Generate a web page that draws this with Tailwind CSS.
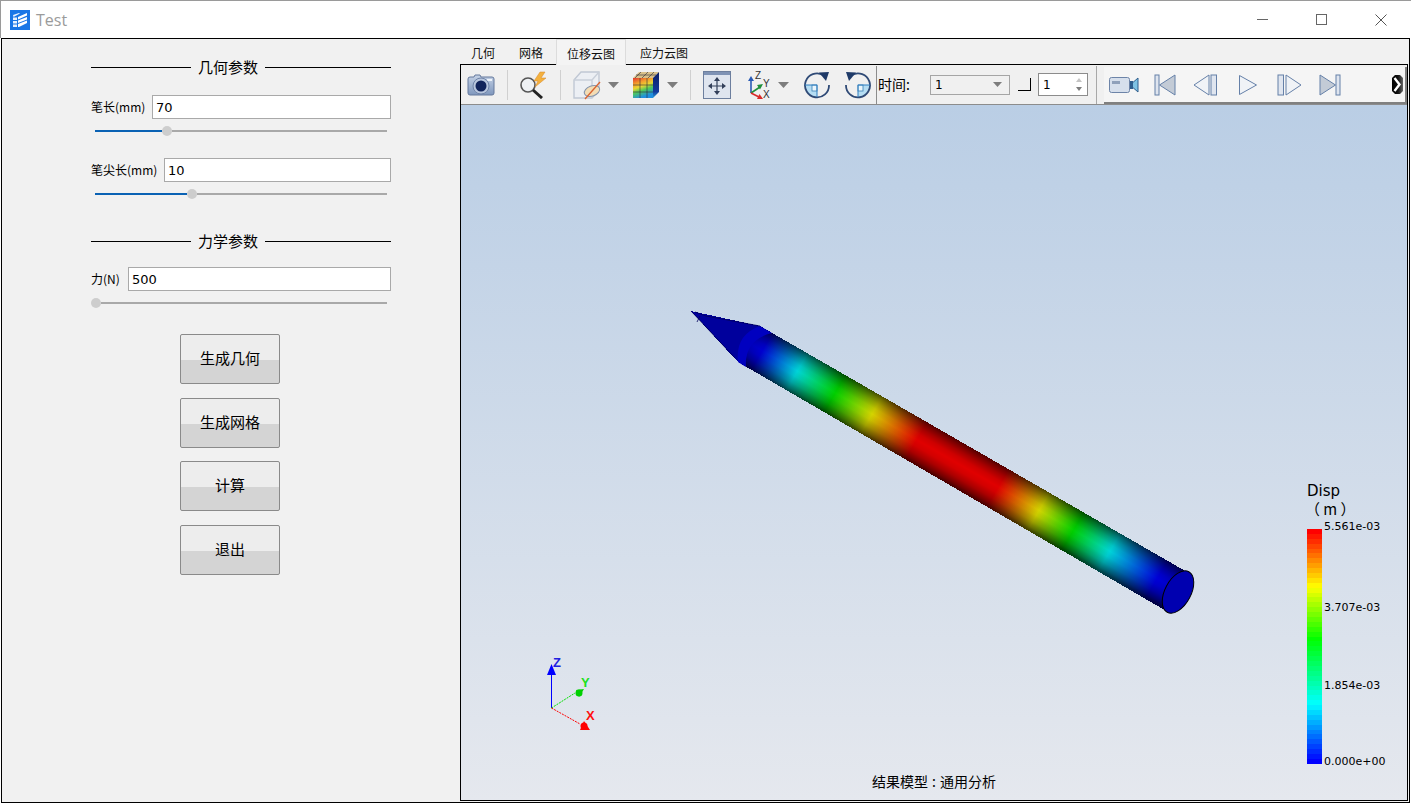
<!DOCTYPE html>
<html lang="zh">

<head>
    <meta charset="UTF-8">
    <title>Test</title>
    <script src="https://cdn.jsdelivr.net/npm/@tailwindcss/browser@4"></script>
</head>

<body class="w-[1411px] h-[803px] overflow-hidden bg-white text-black font-['Noto_Sans_CJK_SC',sans-serif]">

    <!-- Title bar -->
    <div class="h-[38px] flex items-center border-t border-l border-[#9a9a9a] bg-white">
        <svg class="ml-[9px] w-[20px] h-[20px]" viewBox="0 0 20 20">
            <rect width="20" height="20" fill="#1976e6" />
            <path d="M3 5 L9 3 L10 3.5 L3.5 7 Z M3 7.5 H7 V10 H3 Z M3 11 H7 V13.5 H3 Z M3 14.5 H7 V17 H3 Z" fill="#fff" opacity="0.9" />
            <path d="M8 7 L17 3 V5.5 L8 9.5 Z M8 10.5 L17 7 V9.5 L8 13 Z M8 14 L17 10.5 V13 L9 17 H8 Z" fill="#fff" />
        </svg>
        <span class="ml-[6px] text-[16px] text-[#9b9b9b] font-['Open_Sans',sans-serif]">Test</span>
        <div class="ml-auto flex items-center">
            <div class="w-[11px] h-px bg-[#666]"></div>
            <div class="ml-[48px] w-[11px] h-[11px] border border-[#666]"></div>
            <svg class="ml-[48px] mr-[24px] w-[12px] h-[12px]" viewBox="0 0 12 12">
                <path d="M0.5 0.5 L11.5 11.5 M11.5 0.5 L0.5 11.5" stroke="#555" stroke-width="1" fill="none" />
            </svg>
        </div>
    </div>

    <!-- Main window -->
    <div class="ml-px w-[1409px] h-[765px] border border-black bg-[#f1f1f1] flex">

        <!-- Parameter panel -->
        <div class="w-[458px] pl-[89px]">
            <div class="w-[300px] flex flex-col">
                <div class="mt-[18px] h-[20px] flex items-center">
                    <div class="w-[100px] h-px bg-black"></div>
                    <span class="mx-[7px] w-[60px] text-[15px] leading-[20px] whitespace-nowrap">几何参数</span>
                    <div class="flex-1 h-px bg-black"></div>
                </div>

                <div class="mt-[18px] h-[24px] flex items-center">
                    <label class="w-[61px] text-[12px] whitespace-nowrap">笔长(mm)</label>
                    <input value="70" class="flex-1 min-w-0 h-full border border-[#a9a9a9] bg-white pl-[3px] text-[13px] font-['DejaVu_Sans',sans-serif]">
                </div>
                <div class="mt-[7px] ml-[4px] w-[292px] h-[10px] flex items-center">
                    <div class="w-[67px] h-[2px] bg-[#0a62b4]"></div>
                    <div class="w-[10px] h-[10px] rounded-full bg-[#cdcdcd]"></div>
                    <div class="flex-1 h-[2px] bg-[#a9a9a9]"></div>
                </div>

                <div class="mt-[22px] h-[24px] flex items-center">
                    <label class="w-[73px] text-[12px] whitespace-nowrap">笔尖长(mm)</label>
                    <input value="10" class="flex-1 min-w-0 h-full border border-[#a9a9a9] bg-white pl-[3px] text-[13px] font-['DejaVu_Sans',sans-serif]">
                </div>
                <div class="mt-[7px] ml-[4px] w-[292px] h-[10px] flex items-center">
                    <div class="w-[92px] h-[2px] bg-[#0a62b4]"></div>
                    <div class="w-[10px] h-[10px] rounded-full bg-[#cdcdcd]"></div>
                    <div class="flex-1 h-[2px] bg-[#a9a9a9]"></div>
                </div>

                <div class="mt-[32px] h-[20px] flex items-center">
                    <div class="w-[100px] h-px bg-black"></div>
                    <span class="mx-[7px] w-[60px] text-[15px] leading-[20px] whitespace-nowrap">力学参数</span>
                    <div class="flex-1 h-px bg-black"></div>
                </div>

                <div class="mt-[16px] h-[24px] flex items-center">
                    <label class="w-[37px] text-[12px] whitespace-nowrap">力(N)</label>
                    <input value="500" class="flex-1 min-w-0 h-full border border-[#a9a9a9] bg-white pl-[3px] text-[13px] font-['DejaVu_Sans',sans-serif]">
                </div>
                <div class="mt-[7px] w-[296px] h-[10px] flex items-center">
                    <div class="w-[10px] h-[10px] rounded-full bg-[#cdcdcd]"></div>
                    <div class="flex-1 h-[2px] bg-[#a9a9a9]"></div>
                </div>

                <!-- Buttons -->
                <button class="mt-[26px] ml-[89px] w-[100px] h-[50px] pb-[2px] rounded-[2px] border border-[#8a8a8a] bg-[linear-gradient(to_bottom,#ededed_52%,#d4d4d4_52%)] text-[15px]">生成几何</button>
                <button class="mt-[14px] ml-[89px] w-[100px] h-[50px] pb-[2px] rounded-[2px] border border-[#8a8a8a] bg-[linear-gradient(to_bottom,#ededed_52%,#d4d4d4_52%)] text-[15px]">生成网格</button>
                <button class="mt-[13px] ml-[89px] w-[100px] h-[50px] pb-[2px] rounded-[2px] border border-[#8a8a8a] bg-[linear-gradient(to_bottom,#ededed_52%,#d4d4d4_52%)] text-[15px]">计算</button>
                <button class="mt-[14px] ml-[89px] w-[100px] h-[50px] pb-[2px] rounded-[2px] border border-[#8a8a8a] bg-[linear-gradient(to_bottom,#ededed_52%,#d4d4d4_52%)] text-[15px]">退出</button>
            </div>
        </div>

        <!-- Result area -->
        <div class="w-[948px] flex flex-col mb-px">
            <!-- Tabs -->
            <div class="h-[25px] flex gap-[2px] text-[12px] leading-[28px] text-[#111]">
                <div class="px-[11px]">几何</div>
                <div class="px-[11px]">网格</div>
                <div class="h-[26px] px-[10px] bg-[#f4f4f4] border-x border-t border-[#dcdcdc] relative z-10 leading-[27px]">位移云图</div>
                <div class="ml-[1px] px-[11px]">应力云图</div>
            </div>

            <!-- Viewer -->
            <div class="flex-1 min-h-0 border border-black flex flex-col">
                <!-- Toolbar -->
                <div class="h-[40px] shrink-0 flex items-center border-b border-[#8c8c8c] bg-[#f0f0f0]">
                    <!-- camera -->
                    <svg class="ml-[6px] w-[28px] h-[24px] shrink-0" viewBox="0 0 28 24">
                        <defs>
                            <linearGradient id="camBody" x1="0" y1="0" x2="0" y2="1">
                                <stop offset="0" stop-color="#c5d2e6" />
                                <stop offset="1" stop-color="#7f97bd" />
                            </linearGradient>
                        </defs>
                        <path d="M3 4 H7 L8 2 H13 L14 4 H25 Q27 4 27 6 V20 Q27 22 25 22 H3 Q1 22 1 20 V6 Q1 4 3 4 Z" fill="url(#camBody)" stroke="#64789c" />
                        <rect x="20" y="6" width="5" height="2" fill="#eef3fa" />
                        <circle cx="14" cy="13" r="8" fill="#b9c7de" stroke="#7084a8" />
                        <circle cx="14" cy="13" r="5.5" fill="#12255c" />
                    </svg>
                    <div class="ml-[12px] w-px h-[30px] bg-[#d0d0d0] shrink-0"></div>
                    <!-- query -->
                    <svg class="ml-[11px] w-[28px] h-[28px] shrink-0" viewBox="0 0 28 28">
                        <circle cx="9" cy="14" r="7" fill="#eef1f4" stroke="#555" stroke-width="1.6" />
                        <path d="M14 19 L23 27" stroke="#222" stroke-width="3" />
                        <path d="M21 1 L15 10 H19 L16 16 L27 7 H22 L26 1 Z" fill="#f4b13e" stroke="#d4862a" stroke-width="0.5" />
                    </svg>
                    <div class="ml-[13px] w-px h-[30px] bg-[#d0d0d0] shrink-0"></div>
                    <!-- cube with clip plane -->
                    <svg class="ml-[12px] w-[28px] h-[30px] shrink-0" viewBox="0 0 28 30">
                        <path d="M1 10 L8 2 H26 V20 L19 28 H1 Z" fill="#eceff4" stroke="#c0c8d4" stroke-width="1.4" />
                        <path d="M1 10 H19 V28 M19 10 L26 2" fill="none" stroke="#c8cfd9" stroke-width="1.4" />
                        <ellipse cx="19" cy="21" rx="8" ry="5" transform="rotate(-20 19 21)" fill="#f3dcb4" stroke="#8494ac" />
                        <path d="M12 29 L27 12" stroke="#d9622f" stroke-width="1.3" />
                    </svg>
                    <svg class="ml-[7px] w-[11px] h-[6px] shrink-0" viewBox="0 0 11 6"><path d="M0 0 H11 L5.5 6 Z" fill="#7d7d7d" /></svg>
                    <!-- coloured cube -->
                    <svg class="ml-[13px] w-[28px] h-[28px] shrink-0" viewBox="0 0 28 28">
                        <defs>
                            <linearGradient id="cubeFront" x1="0" y1="0" x2="0.35" y2="1">
                                <stop offset="0" stop-color="#e2352f" />
                                <stop offset="0.3" stop-color="#f3a02e" />
                                <stop offset="0.5" stop-color="#e9d634" />
                                <stop offset="0.7" stop-color="#4fc95a" />
                                <stop offset="1" stop-color="#1f8fe0" />
                            </linearGradient>
                            <linearGradient id="cubeSide" x1="0" y1="0" x2="0" y2="1">
                                <stop offset="0" stop-color="#0d1f66" />
                                <stop offset="0.75" stop-color="#123a9c" />
                                <stop offset="1" stop-color="#2a9ad8" />
                            </linearGradient>
                        </defs>
                        <path d="M1 7 L7 1 H27 L21 7 Z" fill="#d8c08a" />
                        <path d="M21 7 L27 1 V21 L21 27 Z" fill="url(#cubeSide)" />
                        <rect x="1" y="7" width="20" height="20" fill="url(#cubeFront)" />
                        <path d="M8 7 V27 M15 7 V27 M1 14 H21 M1 21 H21 M9 1 L3 7 M16 1 L10 7 M22 1 L16 7 M4 4 H24" stroke="#2b2b3a" stroke-width="0.6" fill="none" />
                    </svg>
                    <svg class="ml-[7px] w-[11px] h-[6px] shrink-0" viewBox="0 0 11 6"><path d="M0 0 H11 L5.5 6 Z" fill="#7d7d7d" /></svg>
                    <div class="ml-[12px] w-px h-[30px] bg-[#d0d0d0] shrink-0"></div>
                    <!-- fit view -->
                    <svg class="ml-[12px] w-[28px] h-[28px] shrink-0" viewBox="0 0 28 28">
                        <rect x="0.5" y="0.5" width="27" height="27" fill="#dfe5ef" stroke="#6d7f9e" />
                        <rect x="1" y="1" width="26" height="3" fill="#7f93b5" />
                        <path d="M14 8 V22 M7 15 H21" stroke="#33405a" stroke-width="1.2" />
                        <path d="M14 6 L11 10 H17 Z M14 24 L11 20 H17 Z M5 15 L9 12 V18 Z M23 15 L19 12 V18 Z" fill="#33405a" />
                    </svg>
                    <!-- axes -->
                    <svg class="ml-[16px] w-[26px] h-[30px] shrink-0" viewBox="0 0 26 30">
                        <path d="M4 23 V10" stroke="#2a5bb5" stroke-width="1.6" />
                        <path d="M4 6 L1 11 H7 Z" fill="#2a5bb5" />
                        <path d="M4 23 L13 17" stroke="#1f8f3a" stroke-width="1.6" />
                        <path d="M16 14 L10 15 L13 19.5 Z" fill="#1f8f3a" />
                        <path d="M4 23 L12 27" stroke="#d92b2b" stroke-width="1.6" />
                        <path d="M16 29 L10 29 L12.5 24 Z" fill="#d92b2b" />
                        <text x="8" y="9" font-size="10" fill="#333" font-family="Liberation Sans">Z</text>
                        <text x="16" y="17" font-size="10" fill="#333" font-family="Liberation Sans">Y</text>
                        <text x="16" y="28" font-size="10" fill="#333" font-family="Liberation Sans">X</text>
                    </svg>
                    <svg class="ml-[5px] w-[11px] h-[6px] shrink-0" viewBox="0 0 11 6"><path d="M0 0 H11 L5.5 6 Z" fill="#7d7d7d" /></svg>
                    <!-- rotate cw -->
                    <svg class="ml-[14px] w-[28px] h-[28px] shrink-0" viewBox="0 0 28 28">
                        <path d="M2 14 H14 V26 A12 12 0 0 1 2 14 Z" fill="#b5ddf3" />
                        <rect x="9" y="14" width="5" height="6" fill="#eaf6fc" stroke="#3a7fb5" stroke-width="0.8" />
                        <path d="M20 4 A12 12 0 1 0 26 14" fill="none" stroke="#2f4a76" stroke-width="1.8" />
                        <path d="M26 1 L16 1.5 L23 10 Z" fill="#1f3a68" />
                        <path d="M2 14 H14 V26" fill="none" stroke="#2f7fc0" stroke-width="1" />
                    </svg>
                    <!-- rotate ccw -->
                    <svg class="ml-[13px] w-[28px] h-[28px] shrink-0" viewBox="0 0 28 28">
                        <path d="M26 14 H14 V26 A12 12 0 0 0 26 14 Z" fill="#b5ddf3" />
                        <rect x="14" y="14" width="5" height="6" fill="#eaf6fc" stroke="#3a7fb5" stroke-width="0.8" />
                        <path d="M8 4 A12 12 0 1 1 2 14" fill="none" stroke="#2f4a76" stroke-width="1.8" />
                        <path d="M2 1 L12 1.5 L5 10 Z" fill="#1f3a68" />
                        <path d="M26 14 H14 V26" fill="none" stroke="#2f7fc0" stroke-width="1" />
                    </svg>
                    <div class="ml-[4px] w-px h-[38px] bg-[#8c8c8c] shrink-0"></div>

                    <!-- time -->
                    <span class="ml-[1px] w-[52px] text-[14px] shrink-0">时间:</span>
                    <div class="w-[80px] h-[20px] border border-[#a5a5a5] flex items-center justify-between pl-[4px] pr-[7px] text-[12px] font-['DejaVu_Sans',sans-serif] shrink-0">
                        <span>1</span>
                        <svg class="w-[9px] h-[5px]" viewBox="0 0 9 5"><path d="M0 0 H9 L4.5 5 Z" fill="#7d7d7d" /></svg>
                    </div>
                    <div class="ml-[8px] w-[13px] h-[13px] border-r border-b border-black shrink-0"></div>
                    <div class="ml-[7px] w-[50px] h-[23px] border border-[#8c8c8c] bg-white flex items-center justify-between pl-[4px] pr-[5px] text-[12px] font-['DejaVu_Sans',sans-serif] shrink-0">
                        <span>1</span>
                        <svg class="w-[6px] h-[13px]" viewBox="0 0 6 13"><path d="M3 0 L6 4 H0 Z" fill="#c4c4c4" /><path d="M0 9 H6 L3 13 Z" fill="#7d7d7d" /></svg>
                    </div>
                    <div class="ml-[8px] w-px h-[38px] bg-[#a8a8a8] shrink-0"></div>

                    <!-- animation toolbar -->
                    <div class="ml-[7px] flex-1 self-end h-[37px] bg-[#f5f5f5] border-r-2 border-b-2 border-[#808080] flex items-center">
                        <svg class="ml-[5px] w-[30px] h-[18px] shrink-0" viewBox="0 0 30 18">
                            <rect x="0.5" y="1.5" width="20" height="15" rx="2" fill="#d6dfec" stroke="#6d84a8" />
                            <rect x="3" y="5" width="8" height="3" fill="#8fa0ba" />
                            <path d="M21 9 L29 2 V16 Z" fill="#7fc3e4" stroke="#2f5f8e" />
                            <rect x="21" y="5" width="3" height="8" fill="#2f5f8e" />
                        </svg>
                        <svg class="ml-[15px] w-[22px] h-[22px] shrink-0" viewBox="0 0 22 22">
                            <rect x="1" y="1" width="4" height="20" fill="#dfe5ef" stroke="#6580a8" />
                            <path d="M21 1 V21 L5.5 11 Z" fill="#c3cbd6" stroke="#6580a8" />
                        </svg>
                        <svg class="ml-[17px] w-[25px] h-[22px] shrink-0" viewBox="0 0 25 22">
                            <path d="M16 1 V21 L1 11 Z" fill="#f0f3f7" stroke="#6580a8" />
                            <rect x="18" y="1" width="5.5" height="20" fill="#dfe5ef" stroke="#6580a8" />
                        </svg>
                        <svg class="ml-[20px] w-[20px] h-[22px] shrink-0" viewBox="0 0 20 22">
                            <path d="M1.5 1.5 V20.5 L18.5 11 Z" fill="#f0f3f7" stroke="#6580a8" />
                        </svg>
                        <svg class="ml-[19px] w-[25px] h-[22px] shrink-0" viewBox="0 0 25 22">
                            <rect x="1" y="1" width="5.5" height="20" fill="#dfe5ef" stroke="#6580a8" />
                            <path d="M9 1 V21 L24 11 Z" fill="#f0f3f7" stroke="#6580a8" />
                        </svg>
                        <svg class="ml-[17px] w-[22px] h-[22px] shrink-0" viewBox="0 0 22 22">
                            <path d="M1 1 V21 L16.5 11 Z" fill="#c3cbd6" stroke="#6580a8" />
                            <rect x="17" y="1" width="4" height="20" fill="#dfe5ef" stroke="#6580a8" />
                        </svg>
                        <!-- overflow chevrons -->
                        <svg class="ml-[51px] w-[11px] h-[19px] shrink-0" viewBox="0 0 11 19">
                            <defs>
                                <linearGradient id="moreFade" x1="0" y1="0" x2="1" y2="0">
                                    <stop offset="0" stop-color="#000" />
                                    <stop offset="0.55" stop-color="#111" />
                                    <stop offset="1" stop-color="#666" />
                                </linearGradient>
                            </defs>
                            <path d="M0 3 L3 0 H8 L11 3 V16 L8 19 H3 L0 16 Z" fill="url(#moreFade)" />
                            <path d="M2.5 3 L7.5 9.5 L2.5 16" stroke="#fff" stroke-width="2.4" fill="none" />
                        </svg>
                    </div>
                </div>

                <!-- 3D view -->
                <div class="flex-1 min-h-0 relative overflow-hidden bg-[linear-gradient(to_bottom,#bacee5,#e5e8ee)]">
                    <svg class="absolute inset-0 w-[946px] h-[695px]" viewBox="461 105 946 695">
                        <defs>
                            <linearGradient id="pencilColor" gradientUnits="userSpaceOnUse" x1="749" y1="344" x2="1178" y2="592">
                                <stop offset="0" stop-color="#0000b8" />
                                <stop offset="0.03" stop-color="#0000d0" />
                                <stop offset="0.112" stop-color="#00d4d8" />
                                <stop offset="0.2" stop-color="#00d000" />
                                <stop offset="0.286" stop-color="#d4d400" />
                                <stop offset="0.39" stop-color="#e00000" />
                                <stop offset="0.58" stop-color="#e00000" />
                                <stop offset="0.675" stop-color="#d4d400" />
                                <stop offset="0.755" stop-color="#00d000" />
                                <stop offset="0.84" stop-color="#00d4d8" />
                                <stop offset="0.95" stop-color="#0000d8" />
                                <stop offset="1" stop-color="#0000c0" />
                            </linearGradient>
                            <!-- vector is exactly normal to the pencil axis, or the shading drifts along it -->
                            <linearGradient id="pencilShade" gradientUnits="userSpaceOnUse" x1="759.5" y1="325.8" x2="738.5" y2="362.2">
                                <stop offset="0" stop-color="#000" stop-opacity="0.62" />
                                <stop offset="0.08" stop-color="#000" stop-opacity="0.46" />
                                <stop offset="0.2" stop-color="#000" stop-opacity="0.26" />
                                <stop offset="0.34" stop-color="#000" stop-opacity="0.08" />
                                <stop offset="0.48" stop-color="#000" stop-opacity="0" />
                                <stop offset="0.62" stop-color="#000" stop-opacity="0.06" />
                                <stop offset="0.78" stop-color="#000" stop-opacity="0.24" />
                                <stop offset="0.92" stop-color="#000" stop-opacity="0.48" />
                                <stop offset="1" stop-color="#000" stop-opacity="0.66" />
                            </linearGradient>
                        </defs>

                        <!-- pencil body and tip -->
                        <path d="M691 311 L760 326 L1187 572 L1168 612 L738 362 Z" fill="url(#pencilColor)" shape-rendering="crispEdges" />
                        <path d="M760 326 L1187 572 L1168 612 L738 362 Z" fill="url(#pencilShade)" shape-rendering="crispEdges" />
                        <path d="M691 311 L760 326 L738 362 Z" fill="#00009c" shape-rendering="crispEdges" />
                        <path d="M760 326 Q735 335 738 362 L746 367 Q744 340 772 333 Z" fill="#0000c0" />
                        <path d="M691 311 L735 358 M695 312 L706 316 M700 316 L697 322 M706 316 L760 326" stroke="#00005a" stroke-width="0.8" fill="none" />
                        <ellipse cx="1178" cy="592" rx="23" ry="13" transform="rotate(-62 1178 592)" fill="#0000b0" stroke="#000" stroke-width="1" />

                        <!-- triad -->
                        <path d="M551.5 708 V673" stroke="#0000ff" stroke-width="1" />
                        <path d="M551.5 664 L547 675 H556 Z" fill="#0000ff" />
                        <path d="M551.5 708 L575 693" stroke="#00e000" stroke-width="1" stroke-dasharray="2 1" />
                        <path d="M584 689 L576 690 L579 697 Z" fill="#00d000" />
                        <circle cx="579" cy="693" r="3.5" fill="#00d000" />
                        <path d="M551.5 708 L580 724" stroke="#ff0000" stroke-width="1" stroke-dasharray="2 1" />
                        <path d="M590 730 L580 730 L584 721 Z" fill="#ff0000" />
                        <circle cx="584" cy="726" r="3.5" fill="#ff0000" />
                        <text x="553" y="667" font-size="13" font-weight="700" fill="#2020e0" font-family="Liberation Sans">Z</text>
                        <text x="581" y="687" font-size="13" font-weight="700" fill="#20e020" font-family="Liberation Sans">Y</text>
                        <text x="586" y="720" font-size="13" font-weight="700" fill="#ff1010" font-family="Liberation Sans">X</text>
                    </svg>

                    <!-- legend -->
                    <div class="absolute left-[846px] top-[378px] w-[90px] flex flex-col font-['DejaVu_Sans',sans-serif]">
                        <div class="text-[15px] leading-[17px] h-[17px]">Disp</div>
                        <div class="-ml-[2px] text-[15px] leading-[17px] h-[29px] font-['Noto_Sans_CJK_SC',sans-serif]">（ m ）</div>
                        <div class="flex h-[235px]">
                            <div id="legend-bar" class="w-[15px] h-full flex flex-col"></div>
                            <div class="relative ml-[2px] flex-1 text-[11px] leading-[14px]">
                                <span class="absolute left-0 -top-[9px]">5.561e-03</span>
                                <span class="absolute left-0 top-[72px]">3.707e-03</span>
                                <span class="absolute left-0 top-[150px]">1.854e-03</span>
                                <span class="absolute left-0 top-[226px]">0.000e+00</span>
                            </div>
                        </div>
                    </div>

                    <div class="absolute left-[411px] top-[666px] text-[14px] leading-[20px] whitespace-nowrap">结果模型<span class="mx-[4px]">:</span>通用分析</div>
                </div>
            </div>
        </div>
    </div>

    <script>
        // Stepped colour bands of the legend bar
        const legendStops = [
            [0, [255, 0, 0]],
            [0.24, [255, 255, 0]],
            [0.47, [0, 255, 0]],
            [0.75, [0, 255, 255]],
            [1, [0, 0, 255]]
        ];
        const legendBar = document.getElementById("legend-bar");
        const bandCount = 48;
        for (let i = 0; i < bandCount; i++) {
            const t = i / (bandCount - 1);
            let s = 0;
            while (s < legendStops.length - 2 && t > legendStops[s + 1][0]) s++;
            const [t0, c0] = legendStops[s];
            const [t1, c1] = legendStops[s + 1];
            const f = (t - t0) / (t1 - t0);
            const band = document.createElement("div");
            band.className = "flex-1";
            band.style.background = `rgb(${c0.map((c, k) => Math.round(c + (c1[k] - c) * f)).join(",")})`;
            legendBar.appendChild(band);
        }
    </script>
</body>

</html>
